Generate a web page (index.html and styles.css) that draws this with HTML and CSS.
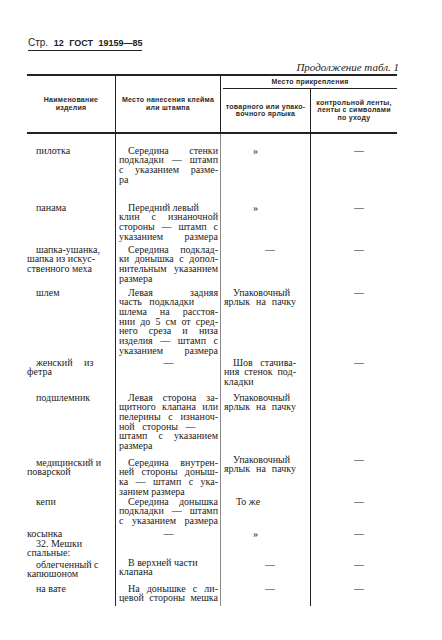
FILE: index.html
```html
<!DOCTYPE html>
<html lang="ru">
<head>
<meta charset="utf-8">
<title>ГОСТ 19159—85</title>
<link rel="stylesheet" href="styles.css">
</head>
<body>
<div class="page">
  <div class="title"><span class="str">Стр.</span> 12 ГОСТ 19159—85</div>
  <div class="cont">Продолжение табл. 1</div>

  <div class="thead">
    <div class="h h1">Наименование<br>изделия</div>
    <div class="h h2">Место нанесения клейма<br>или штампа</div>
    <div class="h h3">Место прикрепления</div>
    <div class="h h4">товарного или упако-<br>вочного ярлыка</div>
    <div class="h h5">контрольной ленты,<br>ленты с символами<br>по уходу</div>
  </div>

  <div class="row r1">
    <div class="c c1"><span class="l i">пилотка</span></div>
    <div class="c c2">
      <span class="l i j">Середина стенки</span>
      <span class="l j">подкладки — штамп</span>
      <span class="l j">с указанием разме-</span>
      <span class="l">ра</span>
    </div>
    <div class="c c3"><span class="q">»</span></div>
    <div class="c c4"><span class="d4">—</span></div>
  </div>

  <div class="row r2">
    <div class="c c1"><span class="l i">панама</span></div>
    <div class="c c2">
      <span class="l i">Передний левый</span>
      <span class="l j">клин с изнаночной</span>
      <span class="l j">стороны — штамп с</span>
      <span class="l j">указанием размера</span>
    </div>
    <div class="c c3"><span class="q">»</span></div>
    <div class="c c4"><span class="d4">—</span></div>
  </div>

  <div class="row r3">
    <div class="c c1">
      <span class="l i">шапка-ушанка,</span>
      <span class="l">шапка из искус-</span>
      <span class="l">ственного меха</span>
    </div>
    <div class="c c2">
      <span class="l i j">Середина подклад-</span>
      <span class="l j">ки донышка с допол-</span>
      <span class="l j">нительным указанием</span>
      <span class="l">размера</span>
    </div>
    <div class="c c3"><span class="d3">—</span></div>
    <div class="c c4"><span class="d4">—</span></div>
  </div>

  <div class="row r4">
    <div class="c c1"><span class="l i">шлем</span></div>
    <div class="c c2">
      <span class="l i j">Левая задняя</span>
      <span class="l ws">часть подкладки</span>
      <span class="l j">шлема на расстоя-</span>
      <span class="l j">нии до 5 см от сред-</span>
      <span class="l j">него среза и низа</span>
      <span class="l j">изделия — штамп с</span>
      <span class="l j">указанием размера</span>
    </div>
    <div class="c c3">
      <span class="l i">Упаковочный</span>
      <span class="l j">ярлык на пачку</span>
    </div>
    <div class="c c4"><span class="d4">—</span></div>
  </div>

  <div class="row r5">
    <div class="c c1">
      <span class="l i wide">женский из</span>
      <span class="l">фетра</span>
    </div>
    <div class="c c2"><span class="l mid">—</span></div>
    <div class="c c3">
      <span class="l i j">Шов стачива-</span>
      <span class="l j">ния стенок под-</span>
      <span class="l">кладки</span>
    </div>
    <div class="c c4"><span class="d4">—</span></div>
  </div>

  <div class="row r6">
    <div class="c c1"><span class="l i">подшлемник</span></div>
    <div class="c c2">
      <span class="l i j">Левая сторона за-</span>
      <span class="l j">щитного клапана или</span>
      <span class="l j">пелерины с изнаноч-</span>
      <span class="l ws">ной стороны —</span>
      <span class="l j">штамп с указанием</span>
      <span class="l">размера</span>
    </div>
    <div class="c c3">
      <span class="l i">Упаковочный</span>
      <span class="l j">ярлык на пачку</span>
    </div>
    <div class="c c4"></div>
  </div>

  <div class="row r7">
    <div class="c c1">
      <span class="l i">медицинский и</span>
      <span class="l">поварской</span>
    </div>
    <div class="c c2">
      <span class="l i j">Середина внутрен-</span>
      <span class="l j">ней стороны доныш-</span>
      <span class="l j">ка — штамп с ука-</span>
      <span class="l">занием размера</span>
    </div>
    <div class="c c3 up">
      <span class="l i">Упаковочный</span>
      <span class="l j">ярлык на пачку</span>
    </div>
    <div class="c c4 up"><span class="d4">—</span></div>
  </div>

  <div class="row r8">
    <div class="c c1"><span class="l i">кепи</span></div>
    <div class="c c2">
      <span class="l i j">Середина донышка</span>
      <span class="l j">подкладки — штамп</span>
      <span class="l j">с указанием размера</span>
    </div>
    <div class="c c3"><span class="same">То же</span></div>
    <div class="c c4"><span class="d4">—</span></div>
  </div>

  <div class="row r9">
    <div class="c c1"><span class="l">косынка</span></div>
    <div class="c c2"><span class="l mid">—</span></div>
    <div class="c c3"><span class="q">»</span></div>
    <div class="c c4"><span class="d4">—</span></div>
  </div>

  <div class="row r10">
    <div class="c c1">
      <span class="l i">32. Мешки</span>
      <span class="l">спальные:</span>
    </div>
    <div class="c c2"></div>
    <div class="c c3"></div>
    <div class="c c4"></div>
  </div>

  <div class="row r11">
    <div class="c c1">
      <span class="l i">облегченный с</span>
      <span class="l">капюшоном</span>
    </div>
    <div class="c c2 up2">
      <span class="l i">В верхней части</span>
      <span class="l">клапана</span>
    </div>
    <div class="c c3"><span class="d3">—</span></div>
    <div class="c c4"><span class="d4">—</span></div>
  </div>

  <div class="row r12">
    <div class="c c1"><span class="l i">на вате</span></div>
    <div class="c c2">
      <span class="l i j">На донышке с ли-</span>
      <span class="l j">цевой стороны мешка</span>
    </div>
    <div class="c c3"><span class="d3">—</span></div>
    <div class="c c4"><span class="d4">—</span></div>
  </div>
</div>
</body>
</html>
```

FILE: styles.css
```css
html, body {
  margin: 0;
  padding: 0;
  background: #ffffff;
}

body {
  font-family: "Liberation Serif", "Times New Roman", serif;
  color: #222222;
  font-size: 10px;
  line-height: 10px;
}

.page {
  width: 370px;
  padding: 37px 0 0 27px;
}

/* page heading */
.title {
  display: block;
  width: max-content;
  margin-left: 1px;
  font-family: "Liberation Sans", Arial, sans-serif;
  font-weight: 700;
  font-size: 9px;
  line-height: 12px;
  word-spacing: 3px;
  padding-bottom: 1px;
  border-bottom: 1.5px solid #222222;
}

.title .str {
  font-weight: 400;
  font-size: 10px;
}

.cont {
  margin: 9.5px -2px 1px 0;
  text-align: right;
  font-style: italic;
  font-size: 11px;
  line-height: 12px;
}

/* table head */
.thead {
  display: grid;
  grid-template-columns: 89px 105px 90px 86px;
  grid-template-rows: 13px 43px;
  border-top: 2px solid #222222;
  border-bottom: 2px solid #222222;
  font-family: "Liberation Sans", Arial, sans-serif;
  font-weight: 700;
  font-size: 7px;
  line-height: 7.5px;
  letter-spacing: 0.25px;
  color: #2a2a2a;
}

.h {
  box-sizing: border-box;
  display: flex;
  align-items: center;
  justify-content: center;
  text-align: center;
}

.h1 {
  grid-row: 1 / 3;
  border-right: 1px solid #222222;
}

.h2 {
  grid-row: 1 / 3;
  border-right: 1px solid #222222;
}

.h3 {
  grid-column: 3 / 5;
  border-bottom: 1px solid #222222;
  margin-left: 2px;
}

.h4 {
  border-right: 1px solid #222222;
}

/* table body */
.row {
  display: grid;
  grid-template-columns: 89px 105px 90px 86px;
  font-size: 10px;
  line-height: 9.7px;
}

.c {
  box-sizing: border-box;
}

.c1 {
  border-right: 1px solid #222222;
  padding-right: 10px;
}

.c2 {
  border-right: 1px solid #8a8a8a;
  padding-left: 3px;
  padding-right: 2px;
}

.c3 {
  border-right: 1px solid #222222;
  padding-left: 3px;
  padding-right: 14px;
}

.r1 .c {
  padding-top: 12px;
}

.r1 { height: 69px; }
.r2 { height: 42px; }
.r3 { height: 43px; }
.r4 { height: 70px; }
.r5 { height: 35px; }
.r6 { height: 65px; }
.r7 { height: 39px; }
.r8 { height: 32px; }
.r9 { height: 10px; }
.r10 { height: 21px; }
.r11 { height: 24px; }
.r12 { height: 22px; }

.l {
  display: block;
}

.i {
  text-indent: 9px;
}

.j {
  text-align: justify;
  text-align-last: justify;
}

.ws {
  word-spacing: 5px;
}

.wide {
  word-spacing: 9px;
}

.mid {
  text-align: center;
}

.up > :first-child {
  margin-top: -3px;
}

.up2 > :first-child {
  margin-top: -2px;
}

.q {
  display: block;
  padding-left: 29px;
}

.d3 {
  display: block;
  padding-left: 41px;
}

.d4 {
  display: block;
  padding-left: 43px;
}

.same {
  display: block;
  padding-left: 12px;
}
```
